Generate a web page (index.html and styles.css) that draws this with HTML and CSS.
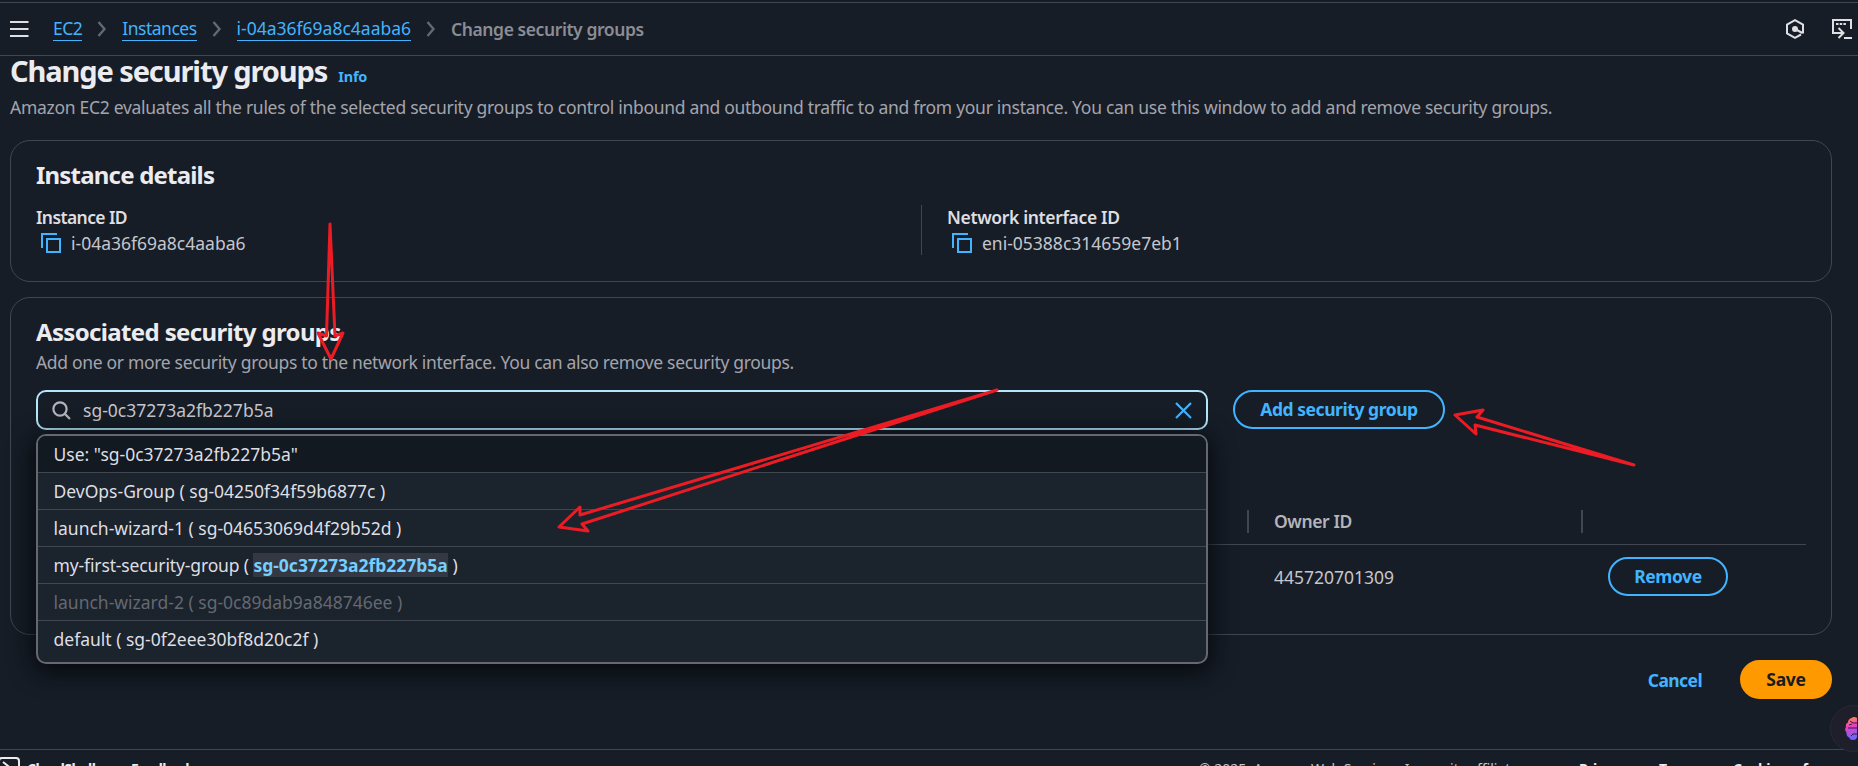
FILE: index.html
```html
<!DOCTYPE html>
<html lang="en">
<head>
<meta charset="utf-8">
<title>Change security groups | EC2</title>
<link rel="stylesheet" href="styles.css">
</head>
<body>
<header class="topbar">
  <svg class="menu" width="19" height="18" viewBox="0 0 19 18" stroke="#dedee3" stroke-width="2" fill="none"><path d="M0 2h18.500M0 9h18.500M0 16h18.500"/></svg>
  <nav class="crumbs">
    <a class="tight">EC2</a>
    <svg class="chev" width="10" height="16" viewBox="0 0 10 16"><path d="M1.500 1l6 7-6 7"/></svg>
    <a class="tight">Instances</a>
    <svg class="chev" width="10" height="16" viewBox="0 0 10 16"><path d="M1.500 1l6 7-6 7"/></svg>
    <a>i-04a36f69a8c4aaba6</a>
    <svg class="chev" width="10" height="16" viewBox="0 0 10 16"><path d="M1.500 1l6 7-6 7"/></svg>
    <span class="here">Change security groups</span>
  </nav>
  <div class="tools">
    <svg width="18" height="20" viewBox="0 0 18 20" fill="none" stroke="#dedee3" stroke-width="2"><path d="M17 14.400V5.600L9 1.200 1 5.600v8.800l8 4.400 6-3.300M9 10l7.500 4"/><circle cx="9" cy="10" r="2" fill="#dedee3"/></svg>
    <svg width="20" height="20" viewBox="0 0 20 20" fill="none" stroke="#dedee3" stroke-width="2"><path d="M19 10V1H1v13h10M6.500 9l5 5-5 5M12 19h8"/><path d="M4 5h10" stroke-dasharray="2.500 1.200"/></svg>
  </div>
</header>
<main class="page">
  <div class="title"><h1>Change security groups</h1><a class="info">Info</a></div>
  <p class="lead">Amazon EC2 evaluates all the rules of the selected security groups to control inbound and outbound traffic to and from your instance. You can use this window to add and remove security groups.</p>
  <section class="card details">
    <h2>Instance details</h2>
    <div class="cols">
      <div class="col">
        <div class="label narrow">Instance ID</div>
        <div class="value"><svg width="20" height="20" viewBox="0 0 20 20" fill="none" stroke="#42b4ff" stroke-width="2"><path d="M1 15V1h15M6 6h13v13H6z"/></svg><span>i-04a36f69a8c4aaba6</span></div>
      </div>
      <div class="col second">
        <div class="label">Network interface ID</div>
        <div class="value"><svg width="20" height="20" viewBox="0 0 20 20" fill="none" stroke="#42b4ff" stroke-width="2"><path d="M1 15V1h15M6 6h13v13H6z"/></svg><span>eni-05388c314659e7eb1</span></div>
      </div>
    </div>
  </section>
  <section class="card groups">
    <h2 class="wide">Associated security groups</h2>
    <p class="hint">Add one or more security groups to the network interface. You can also remove security groups.</p>
    <div class="picker">
      <div class="combo">
        <div class="input">
          <svg width="19" height="19" viewBox="0 0 19 19" fill="none" stroke="#b4b4bb" stroke-width="2.200"><circle cx="8" cy="8" r="6.600"/><path d="M12.600 12.600l5.400 5.400"/></svg>
          <span>sg-0c37273a2fb227b5a</span>
          <svg class="clear" width="17" height="17" viewBox="0 0 17 17" stroke="#42b4ff" stroke-width="2.200"><path d="M1 1l15 15M16 1L1 16"/></svg>
        </div>
        <ul class="menu-list">
          <li class="active">Use: "sg-0c37273a2fb227b5a"</li>
          <li>DevOps-Group ( sg-04250f34f59b6877c )</li>
          <li>launch-wizard-1 ( sg-04653069d4f29b52d )</li>
          <li><span class="grp">my-first-security-group ( </span><mark>sg-0c37273a2fb227b5a</mark> )</li>
          <li class="off">launch-wizard-2 ( sg-0c89dab9a848746ee )</li>
          <li>default ( sg-0f2eee30bf8d20c2f )</li>
        </ul>
      </div>
      <a class="btn add">Add security group</a>
    </div>
    <div class="table">
      <div class="row head"><span class="owner">Owner ID</span><span class="act"></span></div>
      <div class="row"><span class="owner">445720701309</span><span class="act"><a class="btn remove">Remove</a></span></div>
    </div>
  </section>
  <div class="actions"><a class="cancel">Cancel</a><a class="btn save">Save</a></div>
</main>
<footer class="footer">
  <svg width="20" height="20" viewBox="0 0 20 20" fill="none" stroke="#ebebf0" stroke-width="2"><rect x="-1" y="1" width="20" height="18" rx="3"/><path d="M3 5l5 4-5 4"/></svg>
  <b class="f1">CloudShell</b><b class="f2">Feedback</b>
  <span class="copy">© 2025, Amazon Web Services, Inc. or its affiliates.</span>
  <b class="f3">Privacy</b><b class="f4">Terms</b><b class="f5">Cookie preferences</b>
</footer>
<div class="assistant">
  <svg width="30" height="30" viewBox="0 0 30 30">
    <defs><linearGradient id="g" x1="0" y1="0" x2=".3" y2="1"><stop offset="0" stop-color="#ff9a3c"/><stop offset=".45" stop-color="#e93cc8"/><stop offset="1" stop-color="#5b6cff"/></linearGradient></defs>
    <path fill="url(#g)" d="M13 4Q10 2 7.500 4Q4 5 4 8.500Q1 10 2 13Q0 16 2.500 18.500Q2 22 5 23.500Q6 26 9 26Q12 26 13 23.500ZM15 4Q18 2 20.500 4Q24 5 24 8.500Q27 10 26 13Q28 16 25.500 18.500Q26 22 23 23.500Q22 26 19 26Q16 26 15 23.500Z"/>
    <path fill="none" stroke="#301b46" stroke-width="1" d="M13 14H4M13 9H9L6 7M13 20H9L7 22M5 11l3-1"/>
  </svg>
</div>
<svg class="arrows" width="1858" height="766" viewBox="0 0 1858 766" fill="none" stroke="#ed1c24" stroke-width="3" stroke-linejoin="round">
  <path d="M330 224L326.500 336L318 333L331 359L343 333L335 336Z"/>
  <path d="M997 390L580 515L580 507L559 527L588 531L582 524Z"/>
  <path d="M1634 465L1477 417L1483 410L1455 415L1476 434L1475 425Z"/>
</svg>
</body>
</html>
```
FILE: styles.css
```css
* { box-sizing: border-box; }
html, body { height: 100%; }
body { margin: 0; background: #161d26; color: #ebebf0; font: 17.5px/24px "Noto Sans", sans-serif; overflow: hidden; display: flex; flex-direction: column; position: relative; white-space: nowrap; }
h1, h2, p, ul { margin: 0; padding: 0; }
.topbar { flex: none; margin-top: 2px; height: 54px; border-top: 1px solid #424650; border-bottom: 1px solid #424650; display: flex; align-items: center; padding: 0 6px 0 10px; }
.crumbs { display: flex; align-items: center; margin: -1px 0 0 24px; gap: 15px; }
.crumbs a { color: #42b4ff; border-bottom: 1px solid #42b4ff; line-height: 23px; }
.crumbs .tight { letter-spacing: -.5px; }
.chev { fill: none; stroke: #656871; stroke-width: 2.4; }
.here { color: #8c8c94; font-weight: 600; letter-spacing: -.42px; }
.tools { margin-left: auto; display: flex; gap: 28px; }
.page { padding: 0 26px 0 10px; flex: 1; }
.title { display: flex; align-items: baseline; gap: 11px; height: 35px; }
h1 { font-size: 29px; line-height: 29px; font-weight: 700; letter-spacing: -1.1px; }
.info { color: #42b4ff; font-size: 14.5px; font-weight: 700; letter-spacing: -.2px; }
.lead { margin-top: 4px; color: #a4a4ad; letter-spacing: -.29px; }
.card { border: 1px solid #424650; border-radius: 20px; padding: 0 25px; }
h2 { font-size: 24px; line-height: 30px; font-weight: 700; letter-spacing: -.8px; }
h2.wide { letter-spacing: -.65px; }
.details { height: 142px; margin-top: 21px; padding-top: 19px; }
.cols { display: grid; grid-template-columns: 885px 1fr; margin-top: 15px; }
.col { height: 50px; }
.second { border-left: 1px solid #424650; padding-left: 25px; }
.label { font-weight: 600; color: #dedee3; letter-spacing: -.35px; line-height: 25px; }
.label.narrow { letter-spacing: -.6px; }
.value { display: flex; align-items: center; gap: 10px; padding-left: 5px; color: #c6c6cd; height: 25px; }
.groups { height: 338px; margin-top: 15px; padding-top: 19px; }
.hint { color: #a4a4ad; margin-top: 3px; letter-spacing: -.32px; }
.picker { display: flex; gap: 25px; margin-top: 16px; }
.combo { width: 1172px; position: relative; }
.input { height: 40px; border: 2px solid #b5e5fb; border-radius: 10px; display: flex; align-items: center; padding: 0 14px; gap: 12px; color: #c6c6cd; line-height: 22px; }
.clear { margin-left: auto; }
.menu-list { position: absolute; top: 44px; left: 0; width: 1172px; height: 230px; background: #1b232d; border: 2px solid #656871; border-radius: 10px; list-style: none; overflow: hidden; box-shadow: 0 5px 24px 2px #06070c; z-index: 2; }
.menu-list li { height: 37px; border-bottom: 1px solid #424650; padding: 6px 16px 6px 15.5px; color: #dedee3; }
.menu-list .active { background: #131920; }
.menu-list li:last-child { border: 0; }
.menu-list .off { color: #656871; }
.grp { letter-spacing: -.13px; }
mark { background: #333843; color: #75cfff; font-weight: 700; }
.btn { display: flex; align-items: center; justify-content: center; height: 39px; border: 2px solid #42b4ff; border-radius: 20px; color: #42b4ff; font-weight: 700; letter-spacing: -.45px; padding-bottom: 1px; }
.add { width: 212px; }
.table { margin-top: 70px; }
.row { display: grid; grid-template-columns: 1211px 334px 1fr; height: 63px; align-items: center; }
.owner { grid-column: 2; padding-left: 27px; color: #c6c6cd; }
.head { height: 45px; border-bottom: 1px solid #424650; padding-bottom: 1px; }
.head .owner { border-left: 2px solid #424650; height: 23px; line-height: 22px; padding-left: 25px; font-weight: 600; color: #b4b4bb; letter-spacing: -.4px; }
.head .act { border-left: 2px solid #424650; height: 23px; }
.act { padding-left: 27px; }
.remove { width: 120px; }
.actions { display: flex; justify-content: flex-end; align-items: center; gap: 38px; margin-top: 25px; }
.cancel { color: #42b4ff; font-weight: 700; letter-spacing: -.6px; }
.save { width: 92px; background: #ff9900; border-color: #ff9900; color: #161d26; letter-spacing: -.3px; }
.footer { flex: none; height: 17px; border-top: 1px solid #424650; display: flex; font-size: 14px; line-height: 20px; padding-top: 9px; overflow: hidden; }
.footer svg { flex: none; margin-top: -2px; }
.footer b { letter-spacing: -.5px; }
.f1 { margin-left: 7px; width: 104px; }
.copy { margin-left: auto; width: 380px; color: #c6c6cd; }
.f3 { width: 80px; }
.f4 { width: 74px; }
.f5 { width: 125px; overflow: hidden; }
.assistant { position: absolute; left: 1830px; top: 705px; width: 47px; height: 47px; border-radius: 50%; background: #1e1f2b; border: 1px solid #2a2936; padding: 8px 0 0 13px; }
.arrows { position: absolute; left: 0; top: 0; z-index: 5; }
```
